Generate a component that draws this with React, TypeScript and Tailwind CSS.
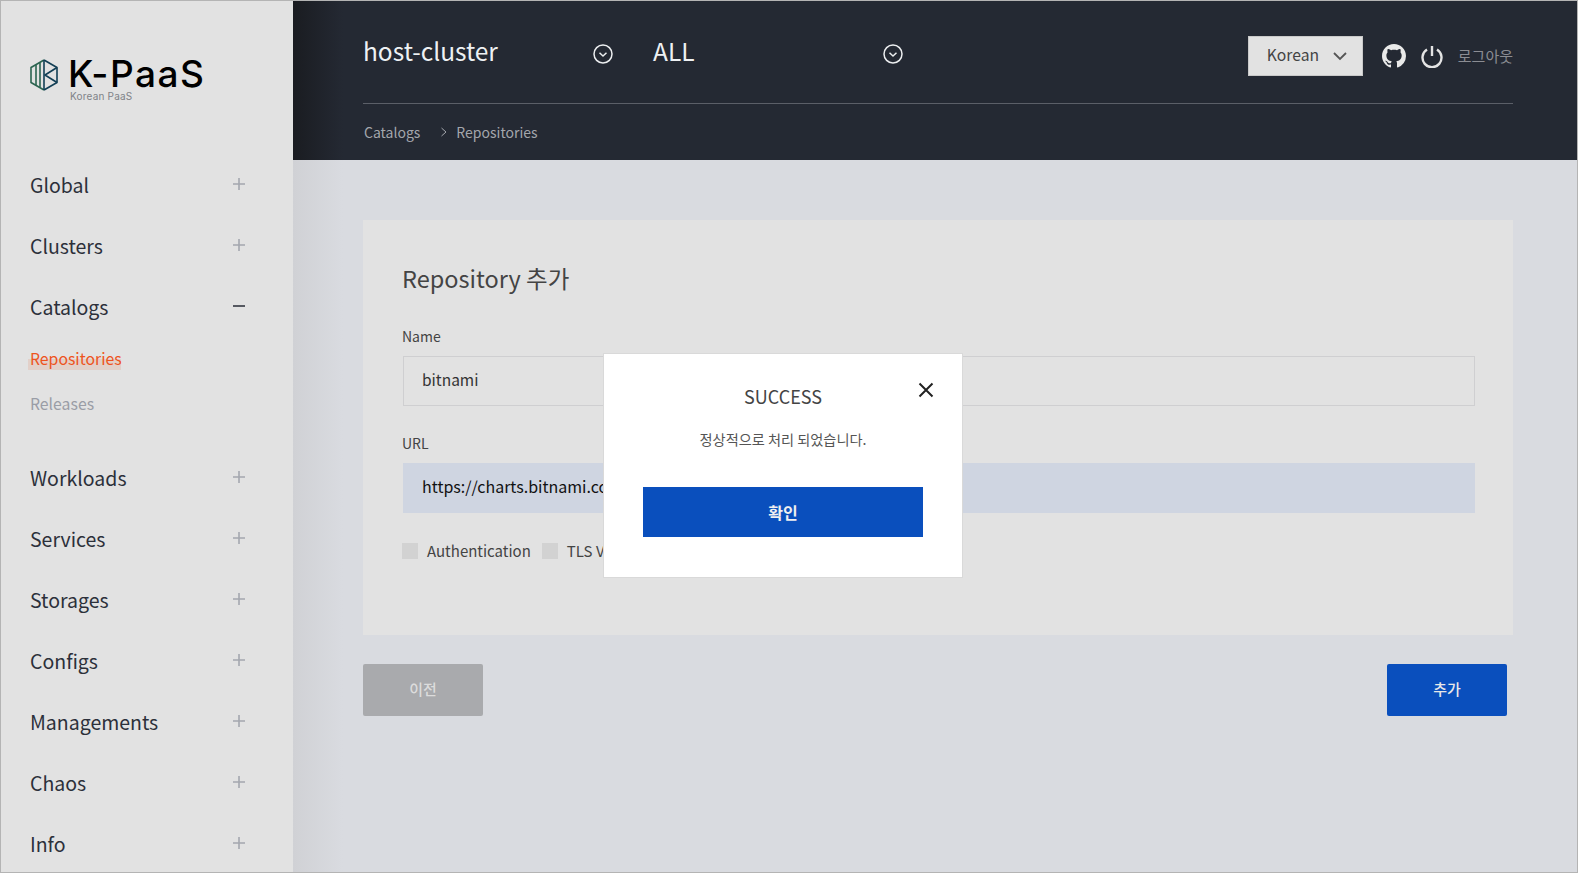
import React from "react";

const items1 = ["Global", "Clusters"];
const items2 = ["Workloads", "Services", "Storages", "Configs", "Managements", "Chaos", "Info"];

function Plus() {
  return (
    <svg width="14" height="14" viewBox="0 0 14 14" className="-mt-[3px] text-[#a4a7af]" aria-hidden>
      <path d="M7 1v12M1 7h12" stroke="currentColor" strokeWidth="1.6" fill="none" />
    </svg>
  );
}

function Minus() {
  return (
    <svg width="14" height="14" viewBox="0 0 14 14" className="-mt-[3px] text-[#333740]" aria-hidden>
      <path d="M1 7h12" stroke="currentColor" strokeWidth="1.6" fill="none" />
    </svg>
  );
}

function MenuRow({ label, open }: { label: string; open?: boolean }) {
  return (
    <div className="flex h-[61px] shrink-0 items-center justify-between pr-[47px] text-[19.5px] text-[#2c303a]">
      <span className="-mt-[2px]">{label}</span>
      {open ? <Minus /> : <Plus />}
    </div>
  );
}

function Logo() {
  return (
    <svg width="28" height="32" viewBox="0 0 28 32" fill="none" aria-hidden>
      <path d="M14 1 L1 8.5 V23.5 L14 31" stroke="#2b6450" strokeWidth="1.6" strokeLinejoin="round" />
      <path d="M14 1 L27 8.5 V23.5 L14 31" stroke="#123f55" strokeWidth="1.6" strokeLinejoin="round" />
      <path d="M6 5.8V26.2M10 3.5V28.5" stroke="#2b6450" strokeWidth="1.6" />
      <path d="M14 1V31" stroke="#123f55" strokeWidth="1.6" />
      <path d="M27 8.5 L15 16 L27 23.5" stroke="#123f55" strokeWidth="1.6" strokeLinejoin="round" />
    </svg>
  );
}

function CircleChevron() {
  return (
    <svg width="20" height="20" viewBox="0 0 20 20" fill="none" className="text-[#eceef0]" aria-hidden>
      <circle cx="10" cy="10" r="9" stroke="currentColor" strokeWidth="1.5" />
      <path d="M6.5 8.7 L10 12 L13.5 8.7" stroke="currentColor" strokeWidth="1.5" />
    </svg>
  );
}

function Github() {
  return (
    <svg width="24" height="24" viewBox="0 0 16 16" fill="#e9e9e9" aria-hidden>
      <path d="M8 0C3.58 0 0 3.58 0 8c0 3.54 2.29 6.53 5.47 7.59.4.07.55-.17.55-.38 0-.19-.01-.82-.01-1.49-2.01.37-2.53-.49-2.69-.94-.09-.23-.48-.94-.82-1.13-.28-.15-.68-.52-.01-.53.63-.01 1.08.58 1.23.82.72 1.21 1.87.87 2.33.66.07-.52.28-.87.51-1.07-1.78-.2-3.64-.89-3.64-3.95 0-.87.31-1.59.82-2.15-.08-.2-.36-1.02.08-2.12 0 0 .67-.21 2.2.82.64-.18 1.32-.27 2-.27s1.36.09 2 .27c1.53-1.04 2.2-.82 2.2-.82.44 1.1.16 1.92.08 2.12.51.56.82 1.27.82 2.15 0 3.07-1.87 3.75-3.65 3.95.29.25.54.73.54 1.48 0 1.07-.01 1.93-.01 2.2 0 .21.15.46.55.38A8.01 8.01 0 0 0 16 8c0-4.42-3.58-8-8-8z" />
    </svg>
  );
}

function Power() {
  return (
    <svg width="24" height="24" viewBox="0 0 24 24" fill="none" aria-hidden>
      <path d="M12 2v10" stroke="#e4e4e4" strokeWidth="2.4" />
      <path d="M7 5.6a9.5 9.5 0 1 0 10 0" stroke="#e4e4e4" strokeWidth="2.4" />
    </svg>
  );
}

export default function App() {
  return (
    <div className="relative flex h-[873px] w-[1578px] overflow-hidden border border-[#b4b4b4] bg-[#d9dbe0] font-['Noto_Sans_CJK_KR','Noto_Sans',sans-serif]">
      <aside className="relative z-10 flex h-full w-[292px] shrink-0 flex-col bg-[#e2e2e2] pl-[29px]">
        <div className="flex h-[154px] shrink-0 items-start gap-[10px] pt-[58px]">
          <Logo />
          <div className="flex flex-col">
            <span className="font-['Inter',sans-serif] text-[37px] leading-[30px] font-medium tracking-[1.5px] text-black">K-PaaS</span>
            <span className="ml-[2px] mt-[2px] font-['Inter',sans-serif] text-[10px] leading-[10px] tracking-[0.2px] text-[#808288]">Korean PaaS</span>
          </div>
        </div>
        {items1.map((l) => (
          <MenuRow key={l} label={l} />
        ))}
        <MenuRow label="Catalogs" open />
        <div className="flex h-[110px] shrink-0 flex-col text-[15.8px]">
          <div className="pt-[9px]">
            <span className="relative text-[#ee541e]">
              Repositories
              <span className="absolute -left-[2px] right-[1px] bottom-0 h-[11px] bg-[#e8501c]/12"></span>
            </span>
          </div>
          <div className="pt-[21px] text-[#9a9da6]">Releases</div>
        </div>
        {items2.map((l) => (
          <MenuRow key={l} label={l} />
        ))}
      </aside>

      <main className="flex min-w-0 flex-1 flex-col bg-[linear-gradient(90deg,#d0d1d5,#d9dbe0_50px)]">
        <header className="h-[159px] shrink-0 bg-[linear-gradient(90deg,#1a1c21,#242933_50px)] pl-[70px] pr-[64px]">
          <div className="flex h-[103px] items-start border-b border-[#5b5f68]">
            <div className="flex w-[290px] items-center justify-between pt-[30px] pr-[40px]">
              <span className="text-[24.5px] leading-[40px] text-[#eef1f3]">host-cluster</span>
              <span className="mt-[5px]"><CircleChevron /></span>
            </div>
            <div className="flex w-[250px] items-center justify-between pt-[30px]">
              <span className="text-[24.5px] leading-[40px] text-[#eef1f3]">ALL</span>
              <span className="mt-[5px]"><CircleChevron /></span>
            </div>
            <div className="ml-auto flex items-center pt-[35px]">
              <div className="flex h-[40px] w-[115px] items-center justify-between border border-[#c9c9c9] bg-[#e2e2e2] pl-[18px] pr-[14px] text-[15.7px] text-[#444]">
                <span className="-mt-[2px]">Korean</span>
                <svg width="16" height="10" viewBox="0 0 16 10" fill="none" aria-hidden>
                  <path d="M2 2 L8 8 L14 2" stroke="#555" strokeWidth="1.8" />
                </svg>
              </div>
              <span className="ml-[19px]"><Github /></span>
              <span className="ml-[14px]"><Power /></span>
              <span className="ml-[14px] text-[15px] text-[#8b8d93]">로그아웃</span>
            </div>
          </div>
          <div className="flex items-center pt-[16px] pl-[1px] text-[14px] leading-[24px] text-[#a3a6ac]">
            <span>Catalogs</span>
            <svg width="8" height="10" viewBox="0 0 8 10" fill="none" className="ml-[20px] mr-[8px]" aria-hidden>
              <path d="M1.5 1 L6 5 L1.5 9" stroke="#a3a6ac" strokeWidth="1" />
            </svg>
            <span>Repositories</span>
          </div>
        </header>

        <div className="pl-[70px] pr-[64px] pt-[60px]">
          <section className="h-[415px] bg-[#e2e2e2] pl-[40px] pr-[38px] pt-[38px]">
            <h2 className="-ml-[1px] text-[23.5px] leading-[40px] text-[#444]">Repository 추가</h2>
            <div className="-ml-[1px] mt-[28px] text-[14px] leading-[20px] text-[#444]">Name</div>
            <div className="mt-[10px] flex h-[50px] items-center border border-[#cfcfd1] pb-[2px] pl-[18px] text-[15.5px] text-[#333]">bitnami</div>
            <div className="-ml-[1px] mt-[27px] text-[14px] leading-[20px] text-[#444]">URL</div>
            <div className="mt-[10px] flex h-[50px] items-center bg-[#cfd5e1] pb-[5px] pl-[19px] text-[16px] text-[#111]">https://charts.bitnami.com/bitnami</div>
            <div className="-ml-[1px] mt-[30px] flex items-center text-[15px] leading-[16px] text-[#444]">
              <span className="h-[16px] w-[16px] bg-[#d2d2d2]"></span>
              <span className="ml-[9px]">Authentication</span>
              <span className="ml-[11px] h-[16px] w-[16px] bg-[#d2d2d2]"></span>
              <span className="ml-[9px]">TLS Verify</span>
            </div>
          </section>
          <div className="mt-[29px] flex justify-between pr-[6px]">
            <button className="h-[52px] w-[120px] rounded-[2px] bg-[#a9aaad] pb-[2px] text-[15px] font-medium text-[#dcdcdc]">이전</button>
            <button className="h-[52px] w-[120px] rounded-[2px] bg-[#0a4fbd] pb-[2px] text-[15px] font-medium text-[#e8e8e8]">추가</button>
          </div>
        </div>
      </main>

      <div className="absolute left-[602px] top-[352px] z-20 h-[225px] w-[360px] border border-[#d9d9d9] bg-white px-[39px] pt-[28px] text-center">
        <button className="absolute right-[28px] top-[28px]" aria-label="close">
          <svg width="16" height="16" viewBox="0 0 16 16" fill="none" aria-hidden>
            <path d="M1.5 1.5 L14.5 14.5 M14.5 1.5 L1.5 14.5" stroke="#222" strokeWidth="2" />
          </svg>
        </button>
        <div className="text-[18px] leading-[28px] text-[#444]">SUCCESS</div>
        <div className="mt-[19px] text-[14.2px] leading-[20px] text-[#555]">정상적으로 처리 되었습니다.</div>
        <button className="mt-[38px] h-[50px] w-[280px] bg-[#0a4fbd] text-[16px] font-bold text-[#f0f0f0]">확인</button>
      </div>
    </div>
  );
}
